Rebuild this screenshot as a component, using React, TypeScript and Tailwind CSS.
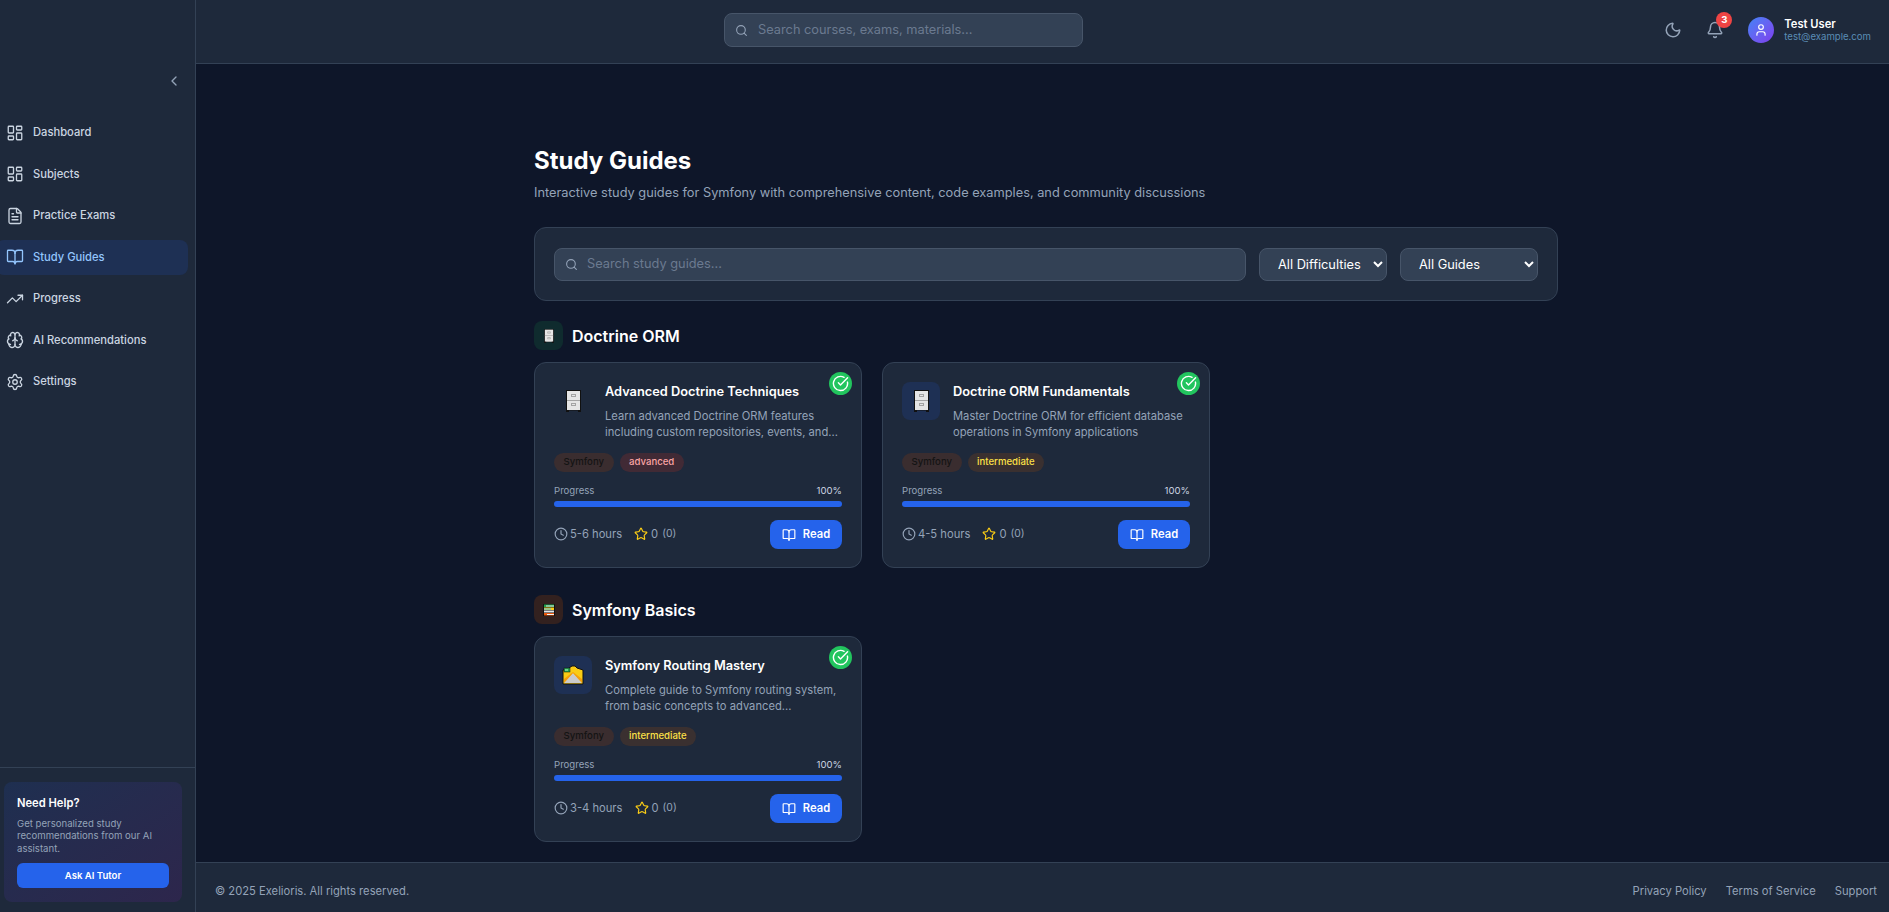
import React from "react";
import {
  Bell,
  BookOpen,
  Brain,
  ChevronLeft,
  CircleCheckBig,
  Clock,
  FileText,
  LayoutDashboard,
  Moon,
  Search,
  Settings,
  Star,
  TrendingUp,
  User,
} from "lucide-react";

const navItems = [
  { label: "Dashboard", icon: LayoutDashboard },
  { label: "Subjects", icon: LayoutDashboard },
  { label: "Practice Exams", icon: FileText },
  { label: "Study Guides", icon: BookOpen, active: true },
  { label: "Progress", icon: TrendingUp },
  { label: "AI Recommendations", icon: Brain },
  { label: "Settings", icon: Settings },
];

const Cabinet = ({ w, h }: { w: number; h: number }) => (
  <svg width={w} height={h} viewBox="0 0 15 22">
    <rect x="0" y="0" width="15" height="20.5" fill="#111" />
    <rect x="1" y="1" width="13" height="19" fill="#e5e5e5" />
    <rect x="1" y="10" width="13" height="1" fill="#a3a3a3" />
    <rect x="5" y="4" width="5" height="3" fill="#a3a3a3" />
    <rect x="6" y="5" width="3" height="1" fill="#e5e5e5" />
    <rect x="5" y="13" width="5" height="3" fill="#a3a3a3" />
    <rect x="6" y="14" width="3" height="1" fill="#e5e5e5" />
    <rect x="0" y="20" width="3" height="2" fill="#111" />
    <rect x="12" y="20" width="3" height="2" fill="#111" />
  </svg>
);

const Books = () => (
  <svg width="12" height="12" viewBox="0 0 12 12">
    <rect x="0" y="0" width="12" height="12" fill="#111" />
    <rect x="1" y="0.5" width="10" height="2.5" fill="#22a34a" />
    <rect x="3" y="1.5" width="8" height="1" fill="#e5e7eb" />
    <rect x="1" y="3.5" width="10" height="2.5" fill="#facc15" />
    <rect x="1" y="4.5" width="7" height="1" fill="#38bdf8" />
    <rect x="1" y="6.5" width="10" height="2" fill="#e5e7eb" />
    <rect x="1" y="9" width="10" height="2.5" fill="#ea580c" />
    <rect x="4" y="10" width="7" height="1" fill="#f5f5f5" />
  </svg>
);

const RouteIcon = () => (
  <svg width="22" height="20" viewBox="0 0 22 20">
    <path d="M1 5 L5 5 L7 3 L10 1 L13 1 L15 3 L18 4 L21 5 L21 19 L1 19 Z" fill="#facc15" stroke="#111" strokeWidth="1" />
    <path d="M2 18 L11 8 L20 18 Z" fill="#cbcbcb" />
    <path d="M2 18 L2 14 L11 7 L20 14 L20 18 L11 8 Z" fill="#f59e0b" />
    <rect x="2" y="3" width="6" height="4" fill="#22a34a" stroke="#111" strokeWidth="0.5" />
    <rect x="3" y="4.5" width="3" height="1" fill="#bbf7d0" />
  </svg>
);

const guides = {
  doctrine: [
    {
      title: "Advanced Doctrine Techniques",
      desc: "Learn advanced Doctrine ORM features including custom repositories, events, and...",
      level: "advanced",
      hours: "5-6 hours",
      icon: <Cabinet w={15} h={22} />,
      iconBg: "",
    },
    {
      title: "Doctrine ORM Fundamentals",
      desc: "Master Doctrine ORM for efficient database operations in Symfony applications",
      level: "intermediate",
      hours: "4-5 hours",
      icon: <Cabinet w={15} h={22} />,
      iconBg: "bg-[#1e3054]",
    },
  ],
  symfony: [
    {
      title: "Symfony Routing Mastery",
      desc: "Complete guide to Symfony routing system, from basic concepts to advanced...",
      level: "intermediate",
      hours: "3-4 hours",
      icon: <RouteIcon />,
      iconBg: "bg-[#1e3054]",
    },
  ],
};

type Guide = (typeof guides.doctrine)[number];

const GuideCard = ({ guide }: { guide: Guide }) => (
  <div className="relative h-[206px] rounded-xl border border-[#334155] bg-[#1e293b] p-[19px]">
    <div className="absolute top-[9px] right-[9px] flex h-[23px] w-[23px] items-center justify-center rounded-full bg-[#22c55e] text-white">
      <CircleCheckBig size={17} strokeWidth={2} />
    </div>
    <div className="flex gap-[13px]">
      <div className={`flex h-[38px] w-[38px] shrink-0 items-center justify-center rounded-lg ${guide.iconBg}`}>
        {guide.icon}
      </div>
      <div className="pt-[1px]">
        <h3 className="h-[20px] text-[12.8px] leading-[18px] font-semibold text-white">{guide.title}</h3>
        <p className="mt-[5px] h-[32px] text-[11.2px] leading-4 text-[#94a3b8]">{guide.desc}</p>
      </div>
    </div>
    <div className="mt-[13px] flex gap-[6px]">
      <span className="flex h-[19px] items-center rounded-full bg-[#3a2d2f] px-[9.5px] text-[9.6px] font-medium text-[#141414]">Symfony</span>
      <span
        className={`flex h-[19px] items-center rounded-full px-[9.5px] text-[9.6px] font-medium ${
          guide.level === "advanced" ? "bg-[#412a35] text-[#fca5a5]" : "bg-[#3a3030] text-[#fde047]"
        }`}
      >
        {guide.level}
      </span>
    </div>
    <div className="mt-[12px] flex justify-between text-[9.6px] leading-[14px]">
      <span className="text-[#94a3b8]">Progress</span>
      <span className="text-[#cbd5e1]">100%</span>
    </div>
    <div className="mt-[3px] h-[6px] rounded-full bg-[#2563eb]" />
    <div className="mt-[13px] flex items-center justify-between">
      <div className="flex items-center text-[11.2px] text-[#94a3b8]">
        <Clock size={14} className="mr-[2px]" />
        <span>{guide.hours}</span>
        <Star size={14} className="mr-[3px] ml-[12px] text-[#facc15]" />
        <span>0</span>
        <span className="ml-[4px] -translate-y-[1px] text-[10.4px]">(0)</span>
      </div>
      <button className="flex h-[29px] w-[72px] items-center justify-center gap-[7px] rounded-lg bg-[#2563eb] text-[11.2px] font-semibold text-white">
        <BookOpen size={14} />
        Read
      </button>
    </div>
  </div>
);

const SectionHeading = ({ title, bg, icon }: { title: string; bg: string; icon: React.ReactNode }) => (
  <div className="mb-3 flex items-center gap-[9px]">
    <div className={`flex h-[29px] w-[29px] items-center justify-center rounded-lg ${bg}`}>{icon}</div>
    <h2 className="text-base font-semibold text-white">{title}</h2>
  </div>
);

export default function App() {
  return (
    <div className="flex h-screen w-full overflow-hidden bg-[#0e1629] font-['Inter',sans-serif]">
      <aside className="flex w-[196px] shrink-0 flex-col border-r border-[#334155] bg-[#1e293b]">
        <div className="flex justify-end pt-[73px] pr-[13px] text-[#94a3b8]">
          <ChevronLeft size={16} />
        </div>
        <nav className="mt-[26px] -ml-[4px] flex flex-1 flex-col gap-[6.5px] pr-[7px]">
          {navItems.map((item) => {
            const Icon = item.icon;
            return (
              <div
                key={item.label}
                className={`flex h-[35px] items-center gap-[9px] rounded-lg pl-[10px] text-[11.2px] font-medium ${
                  item.active ? "bg-[#1e3054] text-[#93c5fd]" : "text-[#cbd5e1]"
                }`}
              >
                <Icon size={18} strokeWidth={1.75} />
                {item.label}
              </div>
            );
          })}
        </nav>
        <div className="border-t border-[#334155] pt-[14px] pr-[13px] pb-[10px] pl-[4px]">
          <div className="h-[120px] rounded-lg bg-gradient-to-br from-[#1e2f50] to-[#2d264c] px-[13px] pt-[13px]">
            <h4 className="text-[11.2px] font-semibold text-white">Need Help?</h4>
            <p className="mt-[6px] text-[9.6px] leading-[12.5px] text-[#94a3b8]">
              Get personalized study recommendations from our AI assistant.
            </p>
            <button className="mt-[8px] h-[25px] w-full rounded-md bg-[#2563eb] text-[9.6px] font-semibold text-white">
              Ask AI Tutor
            </button>
          </div>
        </div>
      </aside>

      <div className="flex min-w-0 flex-1 flex-col">
        <header className="relative flex h-[64px] shrink-0 items-center border-b border-[#334155] bg-[#1e293b] pr-[18px] pb-[3px]">
          <div className="ml-[528px] flex h-[34px] w-[359px] items-center gap-[10px] rounded-lg border border-[#475569] bg-[#334155] px-[10px]">
            <Search size={13} className="text-[#94a3b8]" />
            <span className="text-[12.8px] text-[#6b7a90]">Search courses, exams, materials...</span>
          </div>
          <div className="ml-auto flex items-center">
            <Moon size={18} className="text-[#94a3b8]" />
            <div className="relative ml-[24px]">
              <Bell size={18} className="text-[#94a3b8]" />
              <span className="absolute -top-[9px] left-[10px] flex h-[16px] w-[16px] items-center justify-center rounded-full bg-[#ef4444] text-[9.6px] font-bold text-white">
                3
              </span>
            </div>
            <div className="ml-[24px] flex h-[26px] w-[26px] items-center justify-center rounded-full bg-gradient-to-br from-[#3b82f6] to-[#7c3aed] text-white">
              <User size={14} />
            </div>
            <div className="ml-[10px]">
              <div className="text-[11.2px] leading-[14px] font-semibold text-white">Test User</div>
              <div className="text-[9.6px] leading-[12px] text-[#5b8db5]">test@example.com</div>
            </div>
          </div>
        </header>

        <main className="min-h-0 flex-1 overflow-hidden pt-[81px] pl-[338px]">
          <div className="w-[1024px]">
            <h1 className="text-2xl leading-[32px] font-bold text-white">Study Guides</h1>
            <p className="mt-[6px] text-[12.8px] leading-5 text-[#94a3b8]">
              Interactive study guides for Symfony with comprehensive content, code examples, and community discussions
            </p>
            <div className="mt-[24px] flex h-[74px] items-center gap-[13px] rounded-xl border border-[#334155] bg-[#1e293b] px-[19px]">
              <div className="flex h-[33px] flex-1 items-center gap-[9px] rounded-lg border border-[#475569] bg-[#334155] px-[10px]">
                <Search size={13} className="text-[#94a3b8]" />
                <span className="text-[12.8px] text-[#6b7a90]">Search study guides...</span>
              </div>
              <select className="h-[33px] w-[128px] rounded-lg border border-[#475569] bg-[#334155] pl-[14px] text-[12.8px] text-white">
                <option>All Difficulties</option>
              </select>
              <select className="h-[33px] w-[138px] rounded-lg border border-[#475569] bg-[#334155] pl-[14px] text-[12.8px] text-white">
                <option>All Guides</option>
              </select>
            </div>

            <div className="mt-[20px]">
              <SectionHeading title="Doctrine ORM" bg="bg-[#0f2b2e]" icon={<Cabinet w={10} h={14} />} />
              <div className="grid grid-cols-3 gap-5">
                {guides.doctrine.map((g) => (
                  <GuideCard key={g.title} guide={g} />
                ))}
              </div>
            </div>
            <div className="mt-[27px]">
              <SectionHeading title="Symfony Basics" bg="bg-[#33211f]" icon={<Books />} />
              <div className="grid grid-cols-3 gap-5">
                {guides.symfony.map((g) => (
                  <GuideCard key={g.title} guide={g} />
                ))}
              </div>
            </div>
          </div>
        </main>

        <footer className="flex h-[50px] shrink-0 items-center justify-between border-t border-[#334155] bg-[#1e293b] pt-[7px] pr-[12px] pl-[19px] text-[11.2px] text-[#94a3b8]">
          <span>© 2025 Exelioris. All rights reserved.</span>
          <div className="flex gap-[19px]">
            <span>Privacy Policy</span>
            <span>Terms of Service</span>
            <span>Support</span>
          </div>
        </footer>
      </div>
    </div>
  );
}
